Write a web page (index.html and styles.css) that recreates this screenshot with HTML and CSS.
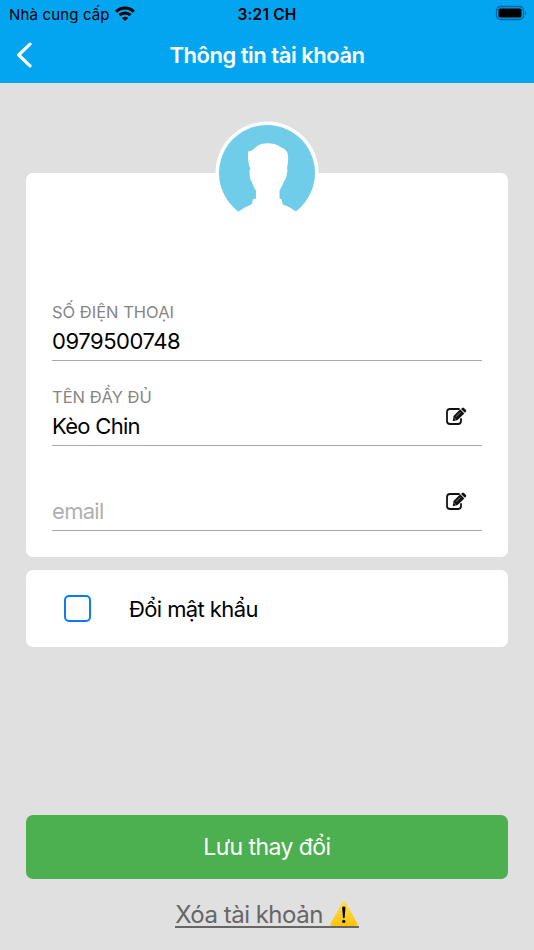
FILE: index.html
```html
<!DOCTYPE html>
<html lang="vi">
<head>
    <meta charset="UTF-8">
    <meta name="viewport" content="width=device-width, initial-scale=1.0">
    <title>Thông tin tài khoản</title>
    <link rel="stylesheet" href="styles.css">
</head>
<body>
    <header>
        <div class="status-bar">
            <div class="carrier">
                <span class="carrier-name">Nhà cung cấp</span>
                <svg class="wifi" width="20" height="15" viewBox="0 0 20 15">
                    <g fill="none" stroke="#000" stroke-width="3">
                        <path d="M1.200 5.800C6 .8 14 .8 18.800 5.800"/>
                        <path d="M4.500 9.200C7.600 6.200 12.400 6.200 15.500 9.200"/>
                    </g>
                    <path d="M10 15L6.800 11.900C8.600 10.200 11.400 10.200 13.200 11.900Z"/>
                </svg>
            </div>
            <span class="clock">3:21 CH</span>
            <svg class="battery" width="32" height="16" viewBox="0 0 32 16">
                <rect x="1.500" y="1.500" width="27" height="13" rx="4" fill="none" stroke="#02669b" stroke-width="1.300"/>
                <rect x="3.500" y="3.500" width="23" height="9" rx="1.500"/>
                <path d="M30 5.800Q31.500 6.500 31.500 8T30 10.200Z" fill="#02669b"/>
            </svg>
        </div>
        <div class="nav-bar">
            <svg class="back" width="16" height="26" viewBox="0 0 16 26">
                <path d="M14 2.200L2.700 13L14 23.800" fill="none" stroke="#fff" stroke-width="3.200" stroke-linecap="round" stroke-linejoin="round"/>
            </svg>
            <h1>Thông tin tài khoản</h1>
        </div>
    </header>

    <main>
        <section class="card profile">
            <svg class="avatar" width="104" height="104" viewBox="0 0 104 104">
                <circle cx="52" cy="52" r="51.500" fill="#fff"/>
                <circle cx="52" cy="52" r="48" fill="#70cdea"/>
                <path fill="#fff" d="M33 30.500C38 30 39 27 43 24.500C48 21.500 57 21.500 63 24.500C66 27 70 27 72 31C74 36 73 42 72 47L72.500 49C72 53 71 59 69 60C68 64 66 67 64.500 69.500V77.500L66.500 78.300L67.500 82.700Q68.500 84 74 86L80.500 90.300L85 104H19L24 90.300L30.500 86Q36 84 37 82.700L38 78.300L41 77.500V69.500C39 67 38 64 36.500 60C35 59 34.500 54 34.500 49L35.500 48C33 43 32.800 36 33 30.500Z"/>
            </svg>

            <div class="field">
                <div class="field-text">
                    <span class="label">SỐ ĐIỆN THOẠI</span>
                    <span class="value phone">0979500748</span>
                </div>
            </div>
            <div class="field">
                <div class="field-text">
                    <span class="label">TÊN ĐẦY ĐỦ</span>
                    <span class="value">Kèo Chin</span>
                </div>
                <svg class="edit" width="22" height="19" viewBox="0 0 22 19">
                    <path d="M14 2H5Q2 2 2 5V14Q2 17 5 17H13Q16 17 16 14V12" fill="none" stroke="#111" stroke-width="1.800" stroke-linecap="round"/>
                    <path d="M7.800 14.200L8.500 9L15.200 2.300L19.300 6.400L12.600 13.100Z" fill="#111"/>
                    <path d="M16 1.900L17.100 .9Q18 .2 18.900 1L21 3Q21.600 3.900 20.900 4.700L19.900 5.700Z" fill="#111"/>
                    <path d="M11 9.700L15.400 5.300M9.200 11L10.800 12.600" stroke="#bbb" stroke-width=".7"/>
                </svg>
            </div>
            <div class="field">
                <div class="field-text">
                    <span class="value placeholder">email</span>
                </div>
                <svg class="edit" width="22" height="19" viewBox="0 0 22 19">
                    <path d="M14 2H5Q2 2 2 5V14Q2 17 5 17H13Q16 17 16 14V12" fill="none" stroke="#111" stroke-width="1.800" stroke-linecap="round"/>
                    <path d="M7.800 14.200L8.500 9L15.200 2.300L19.300 6.400L12.600 13.100Z" fill="#111"/>
                    <path d="M16 1.900L17.100 .9Q18 .2 18.900 1L21 3Q21.600 3.900 20.900 4.700L19.900 5.700Z" fill="#111"/>
                    <path d="M11 9.700L15.400 5.300M9.200 11L10.800 12.600" stroke="#bbb" stroke-width=".7"/>
                </svg>
            </div>
        </section>

        <section class="card password">
            <span class="checkbox"></span>
            <span class="password-text">Đổi mật khẩu</span>
        </section>

        <button class="save">Lưu thay đổi</button>

        <a class="delete" href="#">
            <span class="delete-text">Xóa tài khoản</span>
            <svg class="warning" width="30" height="25" viewBox="0 0 30 26">
                <defs>
                    <linearGradient id="amber" x1="0" y1="0" x2="0" y2="1">
                        <stop offset="0" stop-color="#ffdc50"/>
                        <stop offset="1" stop-color="#fcc40c"/>
                    </linearGradient>
                </defs>
                <path d="M13.200 1.500Q15 -.5 16.800 1.500L29 23.500Q29.500 26 27.500 26H2.500Q.5 26 1 23.500Z" fill="url(#amber)"/>
                <path d="M13.100 7Q13.200 5.600 14.800 5.600T16.500 7L15.700 17Q15.500 18 14.800 18T13.900 17Z"/>
                <circle cx="14.800" cy="21.300" r="1.700"/>
            </svg>
        </a>
    </main>
</body>
</html>
```

FILE: styles.css
```css
* {
    box-sizing: border-box;
}

body {
    margin: 0;
    height: 950px;
    font-family: 'Inter', 'Noto Sans', sans-serif;
    background-color: #e0e0e0;
    color: #000000;
    overflow: hidden;
}

header {
    height: 83px;
    background-color: #03a5f0;
}

.status-bar {
    display: grid;
    grid-template-columns: 1fr auto 1fr;
    align-items: center;
    height: 28px;
    padding: 0 7px 0 9px;
}

.carrier {
    display: flex;
    align-items: center;
    gap: 5px;
}

.carrier-name {
    font-size: 15px;
    letter-spacing: 0.15px;
    white-space: nowrap;
}

.wifi {
    margin-top: -2px;
}

.clock {
    margin-right: 2px;
    font-size: 15.500px;
    font-weight: 600;
    letter-spacing: 0.15px;
}

.battery {
    justify-self: end;
    margin-top: -2px;
}

.nav-bar {
    display: grid;
    grid-template-columns: 1fr auto 1fr;
    align-items: center;
    height: 53px;
    padding: 0 16px;
}

h1 {
    margin: 0;
    font-size: 22px;
    font-weight: 600;
    letter-spacing: -0.48px;
    color: #ffffff;
}

main {
    display: flex;
    flex-direction: column;
    padding: 90px 26px 0;
}

.card {
    background-color: #ffffff;
    border-radius: 7px;
}

.profile {
    display: flex;
    flex-direction: column;
    height: 384px;
    padding: 0 26px;
}

.avatar {
    align-self: center;
    margin-top: -52px;
    margin-bottom: 51px;
    flex-shrink: 0;
}

.field {
    display: flex;
    align-items: flex-end;
    justify-content: space-between;
    height: 85px;
    padding: 0 15px 5px 0;
    border-bottom: 1px solid #aaaaaa;
}

.field-text {
    display: flex;
    flex-direction: column;
}

.label {
    margin-bottom: 3px;
    font-size: 16.500px;
    line-height: 24px;
    color: #858585;
}

.value {
    font-size: 22px;
    line-height: 28px;
    letter-spacing: -0.7px;
}

.phone {
    letter-spacing: -0.45px;
}

.placeholder {
    color: #b0b0b0;
}

.edit {
    margin-bottom: 14px;
}

.password {
    display: flex;
    align-items: center;
    gap: 39px;
    height: 77px;
    margin-top: 13px;
    padding-left: 38px;
}

.checkbox {
    width: 27px;
    height: 27px;
    border: 2px solid #0a7aff;
    border-radius: 5px;
}

.password-text {
    margin-left: -1px;
    font-size: 22px;
    letter-spacing: -0.6px;
}

.save {
    height: 64px;
    margin-top: 168px;
    border: none;
    border-radius: 7px;
    background-color: #4caf50;
    color: #ffffff;
    font-family: inherit;
    font-size: 23px;
    letter-spacing: -0.55px;
}

.delete {
    display: flex;
    align-items: flex-end;
    align-self: center;
    gap: 6px;
    height: 34px;
    margin-top: 15px;
    border-bottom: 2px solid #666666;
    color: #666666;
    text-decoration: none;
}

.delete-text {
    font-size: 24px;
    line-height: 22px;
    letter-spacing: -0.5px;
}
```
